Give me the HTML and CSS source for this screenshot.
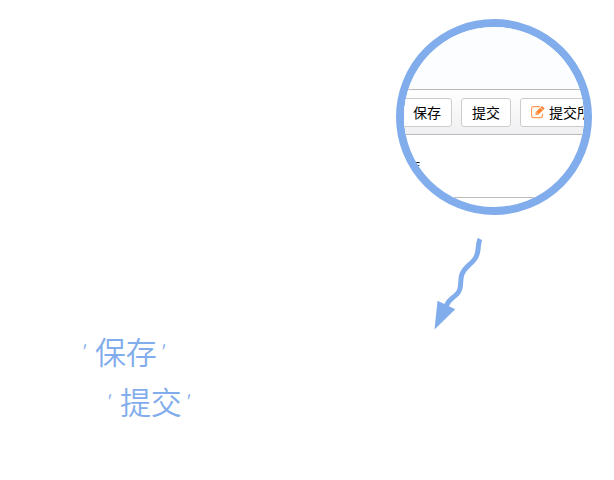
FILE: index.html
```html
<!DOCTYPE html>
<html lang="zh-CN">
<head>
<meta charset="utf-8">
<title>保存 提交</title>
<link rel="stylesheet" href="styles.css">
</head>
<body>
<main class="guide">
  <section class="lens">
    <div class="header"></div>
    <div class="toolbar">
      <button type="button" class="btn">保存</button>
      <button type="button" class="btn">提交</button>
      <button type="button" class="btn">
        <svg class="edit" viewBox="0 0 14 14" aria-hidden="true">
          <path d="M9 1.6H2.6Q.6 1.6 .6 3.6v7q0 2 2 2h7q2 0 2-2V8.5" fill="none" stroke="#ff9a58" stroke-width="1.1"/>
          <path d="M4.6 9.8V7.3L11 1 13.7 3.5 7.2 9.8z" fill="#ff8330"/>
          <path d="M5.6 7.4 7 8.8M9.6 2.7l2.1 2.1" stroke="#fff" stroke-width=".7"/>
        </svg>提交所</button>
    </div>
    <div class="row">作</div>
  </section>
  <svg class="arrow" viewBox="0 0 48 92" aria-hidden="true">
    <path d="M46 1C43 7 46 16 40 22C36 27 31 29 28 36C25 44 29 50 23 56C18 61 15 61 12 68" fill="none" stroke="#82adec" stroke-width="5"/>
    <path d="M3.500 62.700 21.300 71.300.500 91.500z" fill="#82adec"/>
  </svg>
  <div class="caption">
    <p><span class="mark open">'</span>保存<span class="mark">'</span></p>
    <p class="second"><span class="mark open">'</span>提交<span class="mark">'</span></p>
  </div>
</main>
</body>
</html>
```
FILE: styles.css
```css
body {
  margin: 0;
  background: #fff;
  font-family: "Noto Sans CJK SC", sans-serif;
}

.guide {
  display: flex;
  flex-direction: column;
  padding: 19px 22px 0;
}

.lens {
  align-self: flex-end;
  box-sizing: border-box;
  width: 196px;
  aspect-ratio: 1;
  border: 8px solid #82adec;
  border-radius: 50%;
  overflow: hidden;
  font-size: 14px;
  line-height: 20px;
}

.header {
  height: 62px;
  background: #fbfdff;
}

.toolbar {
  display: flex;
  gap: 9px;
  padding: 8px 0 7px;
  margin-left: -2px;
  border: solid #bbb;
  border-width: 1px 0;
  background: linear-gradient(#fff, #f0f0f2);
}

.btn {
  display: flex;
  flex: none;
  align-items: center;
  gap: 4px;
  height: 29px;
  padding: 0 10px 2px;
  border: 1px solid #ccc;
  border-radius: 3px;
  background: #fff;
  color: #000;
  font: inherit;
}

.edit {
  width: 14px;
  height: 14px;
}

.row {
  padding: 20px 2px 22px;
  border-bottom: 1px solid #bbb;
}

.arrow {
  align-self: flex-end;
  width: 48px;
  height: 92px;
  margin: 23px 110px 0 0;
}

.caption {
  padding-left: 57px;
  color: #82adec;
  font-size: 31px;
  font-weight: 350;
  line-height: 50px;
}

.caption p {
  display: flex;
  gap: 1px;
  height: 50px;
  margin: -4px 0 4px;
}

.caption .second {
  padding-left: 25px;
}

.mark {
  font-size: 18px;
  font-style: italic;
  line-height: 52px;
}

.open {
  margin-right: 10px;
}
```
